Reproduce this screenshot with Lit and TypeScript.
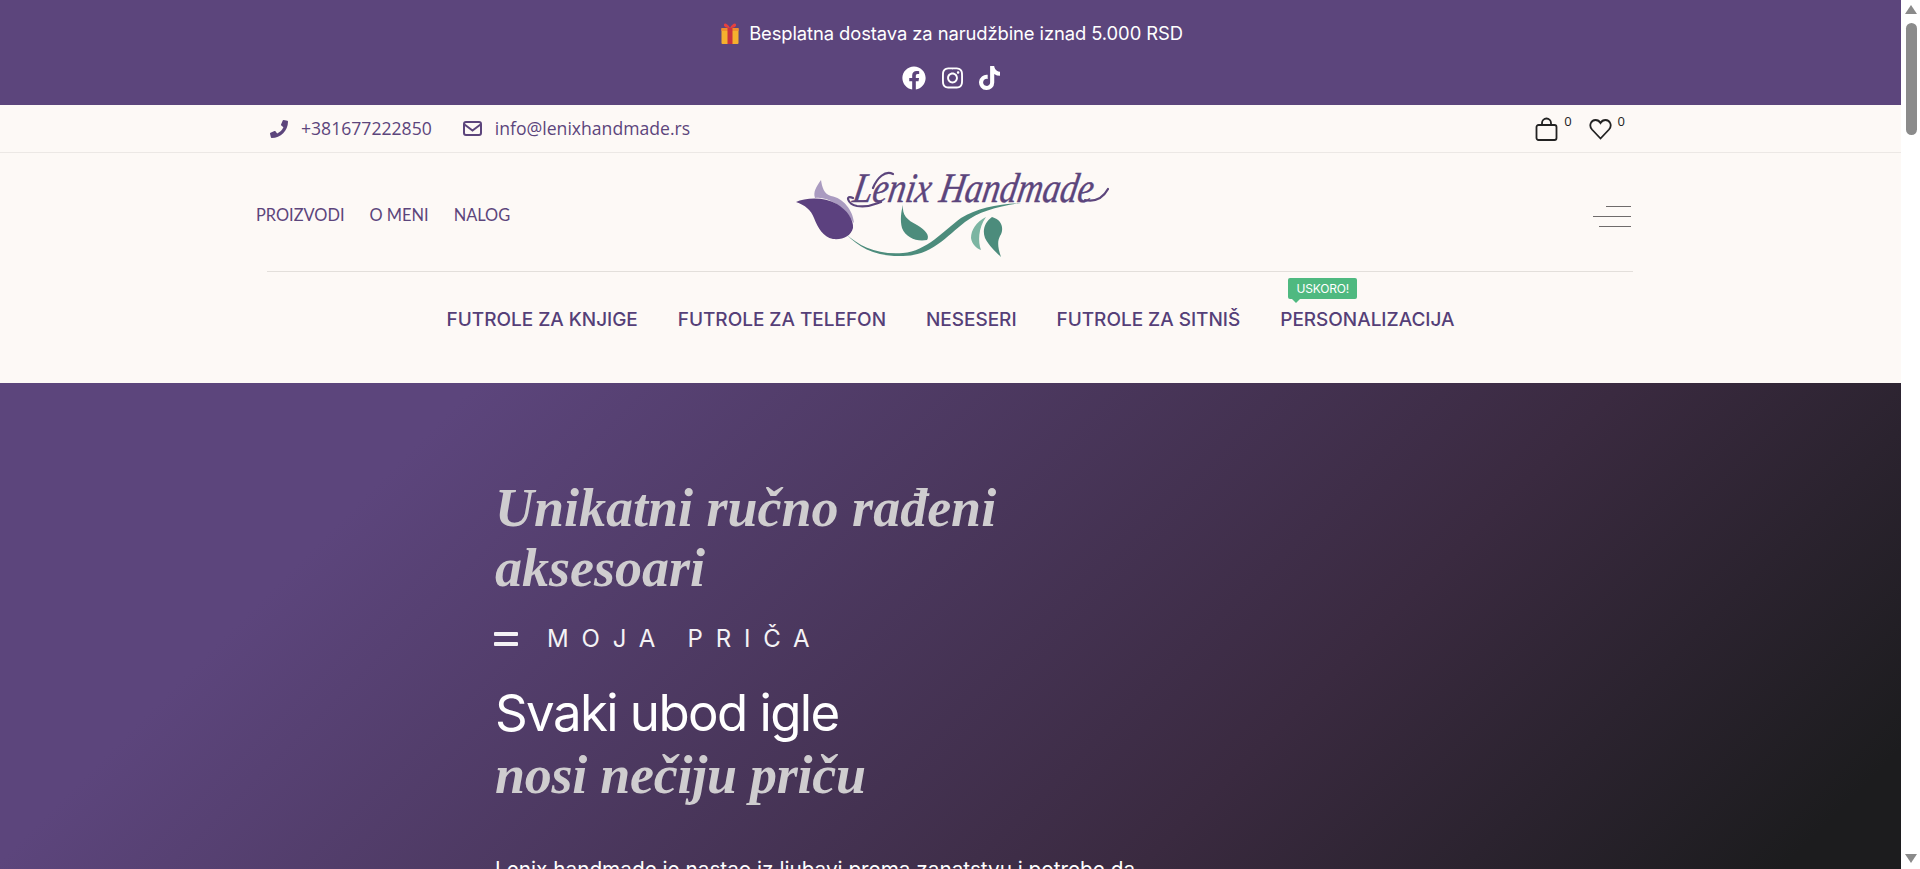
import { LitElement, html, css } from "lit";
import { customElement } from "lit/decorators.js";

const FB = "M504 256C504 119 393 8 256 8S8 119 8 256c0 123.78 90.69 226.38 209.25 245V327.69h-63V256h63v-54.64c0-62.15 37-96.48 93.67-96.48 27.14 0 55.52 4.84 55.52 4.84v61h-31.28c-30.8 0-40.41 19.12-40.41 38.73V256h68.78l-11 71.69h-57.78V501C413.31 482.38 504 379.78 504 256z";
const IG = "M224.1 141c-63.6 0-114.9 51.3-114.9 114.9s51.3 114.9 114.9 114.9S339 319.5 339 255.9 287.7 141 224.1 141zm0 189.6c-41.1 0-74.7-33.5-74.7-74.7s33.5-74.7 74.7-74.7 74.7 33.5 74.7 74.7-33.6 74.7-74.7 74.7zm146.4-194.3c0 14.9-12 26.8-26.8 26.8-14.9 0-26.8-12-26.8-26.8s12-26.8 26.8-26.8 26.8 12 26.8 26.8zm76.1 27.2c-1.7-35.9-9.9-67.7-36.2-93.9-26.2-26.2-58-34.4-93.9-36.2-37-2.1-147.9-2.1-184.9 0-35.8 1.7-67.6 9.9-93.9 36.1s-34.4 58-36.2 93.9c-2.1 37-2.1 147.9 0 184.9 1.7 35.9 9.9 67.7 36.2 93.9s58 34.4 93.9 36.2c37 2.1 147.9 2.1 184.9 0 35.9-1.7 67.7-9.9 93.9-36.2 26.2-26.2 34.4-58 36.2-93.9 2.1-37 2.1-147.8 0-184.8zM398.8 388c-7.8 19.6-22.9 34.7-42.6 42.6-29.5 11.7-99.5 9-132.1 9s-102.7 2.6-132.1-9c-19.6-7.8-34.7-22.9-42.6-42.6-11.7-29.5-9-99.5-9-132.1s-2.6-102.7 9-132.1c7.8-19.6 22.9-34.7 42.6-42.6 29.5-11.7 99.5-9 132.1-9s102.7-2.6 132.1 9c19.6 7.8 34.7 22.9 42.6 42.6 11.7 29.5 9 99.5 9 132.1s2.7 102.7-9 132.1z";
const TT = "M448,209.91a210.06,210.06,0,0,1-122.77-39.25V349.38A162.55,162.55,0,1,1,185,188.31V278.2a74.62,74.62,0,1,0,52.23,71.18V0l88,0a121.18,121.18,0,0,0,1.86,22.17h0A122.18,122.18,0,0,0,381,102.39a121.43,121.43,0,0,0,67,20.14Z";
const PHONE = "M493.4 24.6l-104-24c-11.3-2.6-22.9 3.3-27.5 13.9l-48 112c-4.2 9.8-1.4 21.3 6.9 28l60.6 49.6c-36 76.7-98.9 140.5-177.2 177.2l-49.6-60.6c-6.8-8.3-18.2-11.1-28-6.9l-112 48C3.9 366.5-2 378.1.6 389.4l24 104C27.1 504.2 36.7 512 48 512c256.1 0 464-207.5 464-464 0-11.2-7.7-20.9-18.6-23.4z";

@customElement("app-root")
export class AppRoot extends LitElement {
  static styles = css`
    :host { display: flex; width: 100%; height: 869px; overflow: hidden; background: #fff; }
    * { box-sizing: border-box; }
    .page { width: 1901px; height: 869px; display: flex; flex-direction: column; background: #fdf9f6; overflow: hidden; flex: none; }
    .promo { height: 105px; background: #5c457c; color: #fff; display: flex; flex-direction: column; align-items: center; padding-top: 22px; flex: none; }
    .promo-line { display: flex; align-items: center; gap: 10px; height: 22px; font: 400 18.4px/22px "Inter", sans-serif; letter-spacing: -0.09px; margin-left: 3px; }
    .promo-line svg { width: 18px; height: 21px; display: block; }
    .social { display: flex; align-items: center; gap: 16px; margin-top: 22px; }
    .social svg { height: 24px; display: block; fill: #fff; }
    .contact { height: 48px; flex: none; display: flex; align-items: center; justify-content: space-between; border-bottom: 1px solid #ece8e5; padding: 0 276px 0 270px; font: 400 17.6px/22px "Open Sans", sans-serif; color: #5c457c; }
    .contact-left, .contact-item, .tools, .tool { display: flex; align-items: center; }
    .contact-left { gap: 31px; }
    .contact-item { gap: 13px; }
    .contact-item span { margin-top: -1px; }
    .phone { width: 18px; height: 18px; fill: #5c457c; display: block; }
    .mail { width: 19px; height: 15px; display: block; fill: none; stroke: #5c457c; stroke-width: 2; }
    .tools { gap: 17px; color: #222; }
    .tool { align-items: flex-start; gap: 6px; }
    .tool svg { display: block; fill: none; stroke: #222; stroke-width: 1.8; width: 23px; height: 24px; }
    .tool span { font: 400 13px/14px "Open Sans", sans-serif; margin-top: -3px; }
    .mainrow { height: 118px; flex: none; display: grid; grid-template-columns: 1fr auto 1fr; align-items: center; padding: 7px 270px 1px 270px; }
    .links { display: flex; gap: 25px; font: 400 16.4px/22px "Lato", sans-serif; color: #5c457c; margin: -1px 0 0 -14px; }
    .logo { width: 340px; height: 110px; display: block; }
    .logo text { font: italic 400 42px "Liberation Serif", serif; fill: #5c457c; stroke: #5c457c; stroke-width: 0.4; }
    .logo .flourish { fill: none; stroke: #5c457c; stroke-width: 2.2; stroke-linecap: round; }
    .burger { justify-self: end; display: flex; flex-direction: column; align-items: flex-end; gap: 9px; margin-top: 3px; }
    .burger i { display: block; height: 1px; background: #6f6b6b; }
    .b1 { width: 25px; } .b2 { width: 38px; } .b3 { width: 32px; }
    .rule { width: 1366px; height: 1px; margin-left: 267px; background: #e3dfdb; flex: none; }
    .menu { height: 111px; flex: none; display: flex; justify-content: center; align-items: flex-start; gap: 40px; padding-top: 36px; font: 500 19px/24px "Inter", sans-serif; letter-spacing: -0.03px; color: #553f78; }
    .menu-item { position: relative; white-space: nowrap; }
    .badge { position: absolute; left: 8px; top: -30px; width: 69px; height: 21px; border-radius: 2px; background: #4fb980; color: #fff; font: 400 12px/21px "Inter", sans-serif; letter-spacing: -0.2px; text-align: center; }
    .badge::after { content: ""; position: absolute; left: 4px; top: 21px; border: 4px solid transparent; border-top-color: #4fb980; border-bottom: 0; }
    .hero { flex: 1; min-height: 0; overflow: hidden; padding: 95px 0 0 495px; background: linear-gradient(135deg, #5c457c 0%, #5c457c 20%, #3a2a40 68%, #1c1c1e 95%); color: #fff; }
    .display { font: italic 700 54px/60px "Liberation Serif", serif; color: #cfcdcf; }
    .title { margin: 0; width: 560px; }
    .eyebrow { display: flex; align-items: center; gap: 29px; margin-top: 26px; height: 30px; font: 400 24px/30px "Inter", sans-serif; letter-spacing: 12.8px; margin-left: -1px; color: #f4f2f5; }
    .eyebrow i { display: flex; flex-direction: column; gap: 6px; width: 24px; }
    .eyebrow i::before, .eyebrow i::after { content: ""; display: block; height: 4px; background: #f4f2f5; border-radius: 1px; }
    h2 { margin: 28px 0 0; font-weight: 400; }
    .plain { display: block; font: 400 51px/62px "Inter", sans-serif; letter-spacing: -1.6px; color: #fff; }
    .accent { display: block; line-height: 62px; letter-spacing: -0.25px; }
    .lead { margin: 48px 0 0; font: 400 20.8px/32px "Inter", sans-serif; letter-spacing: -0.03px; white-space: nowrap; color: #fff; }
    .scroll { width: 19px; height: 869px; flex: none; background: #fff; display: flex; flex-direction: column; align-items: center; padding: 5px 0 6px 0; }
    .arrow-up, .arrow-down { width: 0; height: 0; border-left: 6px solid transparent; border-right: 6px solid transparent; margin-left: 1px; }
    .arrow-up { border-bottom: 9px solid #8a8a8a; }
    .arrow-down { border-top: 9px solid #8a8a8a; margin-top: auto; }
    .thumb { width: 11px; height: 112px; border-radius: 6px; background: #8b8b8b; margin-top: 9px; margin-left: 1px; }
  `;

  render() {
    const menu = ["FUTROLE ZA KNJIGE", "FUTROLE ZA TELEFON", "NESESERI", "FUTROLE ZA SITNIŠ"];
    return html`
      <div class="page">
        <div class="promo">
          <div class="promo-line">
            <svg viewBox="0 0 18 21" aria-hidden="true">
              <path d="M9 5C7 1 3.500-.5 3 1.500 2.600 3.500 5 5 9 5c4 0 6.400-1.500 6-3.500C14.500-.5 11 1 9 5z" fill="#e8403e"/>
              <rect x="0.500" y="5" width="17" height="16" rx="1" fill="#f5b02e"/>
              <rect x="0.500" y="5" width="17" height="3" fill="#f08f2c"/>
              <rect x="6.500" y="5" width="5" height="16" fill="#c8323f"/>
            </svg>
            <span>Besplatna dostava za narudžbine iznad 5.000 RSD</span>
          </div>
          <div class="social">
            <svg viewBox="0 0 512 512" width="24"><path d="${FB}"/></svg>
            <svg viewBox="0 0 448 512" width="21"><path d="${IG}"/></svg>
            <svg viewBox="0 0 448 512" width="21"><path d="${TT}"/></svg>
          </div>
        </div>

        <div class="contact">
          <div class="contact-left">
            <div class="contact-item">
              <svg class="phone" viewBox="0 0 512 512"><path d="${PHONE}"/></svg>
              <span>+381677222850</span>
            </div>
            <div class="contact-item">
              <svg class="mail" viewBox="0 0 19 15"><rect x="1" y="1" width="17" height="13" rx="2"/><path d="M1.500 3.500 9.500 9.500 17.500 3.500"/></svg>
              <span>info@lenixhandmade.rs</span>
            </div>
          </div>
          <div class="tools">
            <div class="tool">
              <svg viewBox="0 0 23 24"><rect x="1.500" y="8" width="20" height="15" rx="2"/><path d="M7 8V6a4.500 4.500 0 0 1 9 0v2"/></svg>
              <span>0</span>
            </div>
            <div class="tool">
              <svg viewBox="0 0 23 24"><path d="M11.500 21.500 3 12.500C-.5 8.500 2 3 6.500 3c2.200 0 4 1.200 5 3 1-1.800 2.800-3 5-3 4.500 0 7 5.500 3.500 9.500z"/></svg>
              <span>0</span>
            </div>
          </div>
        </div>

        <div class="mainrow">
          <nav class="links"><span>PROIZVODI</span><span>O MENI</span><span>NALOG</span></nav>
          <svg class="logo" viewBox="0 0 340 110" role="img" aria-label="Lenix Handmade">
            <path d="M40 20C35 27 32 32 34 38C44 36 62 44 72 62L73 63C72 50 62 38 50 36C43 34 41 27 40 20Z" fill="#aa9bc0"/>
            <path d="M15 42C24 38 42 36 56 44C66 50 73 60 72 68C70 76 62 80 52 79C42 77 37 68 33 58C30 50 24 45 15 42Z" fill="#5c417f"/>
            <path d="M65 74C78 86 96 95 122 93C146 91 162 71 180 58C196 48 216 44 240 43C216 46 197 52 184 62C166 76 150 96 122 96C96 97 78 88 65 74Z" fill="#4c8c7c"/>
            <path d="M122 45C121 55 126 60 136 65C145 70 149 76 146 80C136 82 125 78 121 68C119 60 120 52 122 45Z" fill="#4c8c7c"/>
            <path d="M205 57C195 62 190 70 190 78C191 84 195 88 200 90C197 82 197 68 205 57Z" fill="#7cb5a2"/>
            <path d="M211 57C204 62 201 70 204 78C208 86 215 92 220 97C217 88 216 82 219 76C223 70 222 60 211 57Z" fill="#4c8c7c"/>
            <path class="flourish" d="M72 38C64 34 66 44 76 46C88 48 94 44 100 42M112 14C104 10 96 18 92 28M304 40C314 42 322 38 327 29"/>
            <text x="68" y="42" textLength="240" lengthAdjust="spacingAndGlyphs" transform="translate(10 0) skewX(-10)">Lenix Handmade</text>
          </svg>
          <div class="burger"><i class="b1"></i><i class="b2"></i><i class="b3"></i></div>
        </div>
        <div class="rule"></div>

        <nav class="menu">
          ${menu.map((m) => html`<span class="menu-item">${m}</span>`)}
          <span class="menu-item">PERSONALIZACIJA<span class="badge">USKORO!</span></span>
        </nav>

        <section class="hero">
          <h1 class="title display">Unikatni ručno rađeni aksesoari</h1>
          <div class="eyebrow"><i></i><span>MOJA PRIČA</span></div>
          <h2><span class="plain">Svaki ubod igle</span><span class="accent display">nosi nečiju priču</span></h2>
          <p class="lead">Lenix handmade je nastao iz ljubavi prema zanatstvu i potrebe da</p>
        </section>
      </div>
      <div class="scroll"><div class="arrow-up"></div><div class="thumb"></div><div class="arrow-down"></div></div>
    `;
  }
}
